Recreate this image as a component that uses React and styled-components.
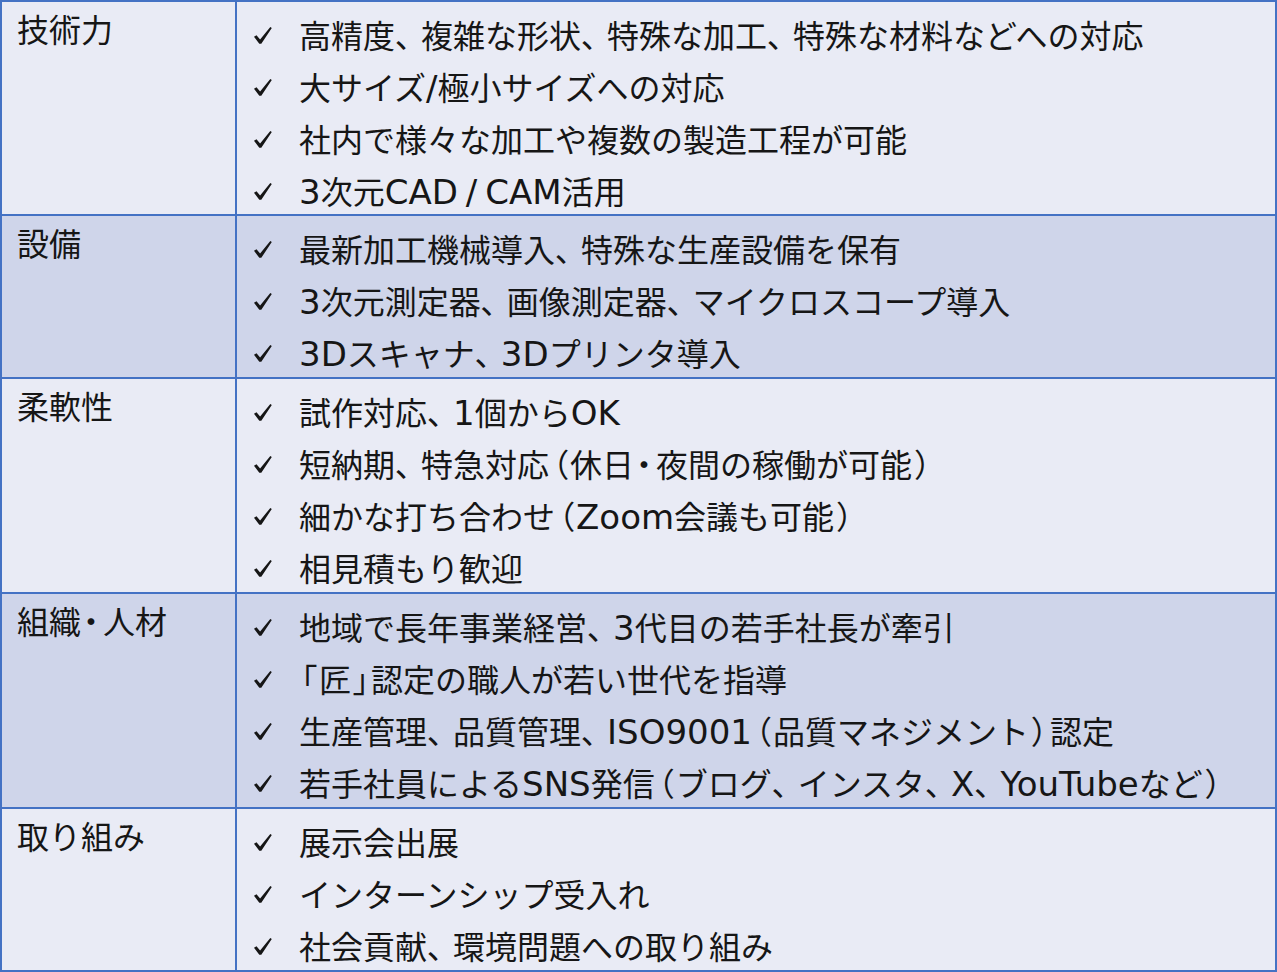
import React from "react";
import styled, { createGlobalStyle } from "styled-components";

const Global = createGlobalStyle`
  html, body { margin: 0; padding: 0; background: #ffffff; }
  body { font-family: "Noto Sans CJK JP", "Noto Sans", sans-serif; color: #161616; }
`;

const rows = [
  {
    label: "技術力",
    h: 212,
    items: [
      "高精度、複雑な形状、特殊な加工、特殊な材料などへの対応",
      "大サイズ/極小サイズへの対応",
      "社内で様々な加工や複数の製造工程が可能",
      "3次元CAD/CAM活用",
    ],
  },
  {
    label: "設備",
    h: 161,
    items: [
      "最新加工機械導入、特殊な生産設備を保有",
      "3次元測定器、画像測定器、マイクロスコープ導入",
      "3Dスキャナ、3Dプリンタ導入",
    ],
  },
  {
    label: "柔軟性",
    h: 213,
    items: [
      "試作対応、1個からOK",
      "短納期、特急対応（休日・夜間の稼働が可能）",
      "細かな打ち合わせ（Zoom会議も可能）",
      "相見積もり歓迎",
    ],
  },
  {
    label: "組織・人材",
    h: 213,
    items: [
      "地域で長年事業経営、3代目の若手社長が牽引",
      "「匠」認定の職人が若い世代を指導",
      "生産管理、品質管理、ISO9001（品質マネジメント）認定",
      "若手社員によるSNS発信（ブログ、インスタ、X、YouTubeなど）",
    ],
  },
  {
    label: "取り組み",
    h: 161,
    items: ["展示会出展", "インターンシップ受入れ", "社会貢献、環境問題への取り組み"],
  },
];

const Table = styled.div`
  display: grid;
  grid-template-columns: 233px 1038px;
  gap: 2px;
  border: 2px solid #4472c4;
  background: #4472c4;
  width: 1273px;
  height: 968px;
`;

const LabelCell = styled.div`
  background: ${(p) => (p.$band ? "#cfd5ea" : "#e9ebf5")};
  padding: 0 0 0 15px;
  font-size: 32px;
  line-height: 52px;
  white-space: nowrap;
`;

const ListCell = styled.ul`
  background: ${(p) => (p.$band ? "#cfd5ea" : "#e9ebf5")};
  margin: 0;
  padding: 6px 0 0 17px;
  list-style: none;
`;

const Item = styled.li`
  display: flex;
  align-items: center;
  height: 52px;
  font-size: 32px;
  line-height: 52px;
  white-space: nowrap;
`;

const CheckBox = styled.span`
  display: flex;
  align-items: center;
  width: 45px;
  flex: none;
  padding-top: 2px;
`;

const Latin = styled.span`
  font-family: "DejaVu Sans", "Noto Sans", sans-serif;
  font-size: 34px;
  line-height: 1;
`;

const Slash = styled.span`
  margin: 0 ${(p) => (p.$wide ? 8 : 0)}px;
`;

const Punct = styled.span`
  font-feature-settings: "palt" 1;
  letter-spacing: ${(p) => p.$space}px;
  margin-left: ${(p) => p.$lead}px;
`;

const punctSpace = {
  "、": [10, 0],
  "（": [2, 3],
  "）": [2, 3],
  "・": [4, 2],
  "「": [2, 2],
  "」": [2, 2],
};

function renderLatin(run, key) {
  if (!run.includes("/")) return <Latin key={key}>{run}</Latin>;
  const bits = run.split("/");
  const wide = bits.every((b) => b.length > 0);
  return (
    <Latin key={key}>
      {bits.map((b, j) => (
        <React.Fragment key={j}>
          {j > 0 && <Slash $wide={wide}>/</Slash>}
          {b}
        </React.Fragment>
      ))}
    </Latin>
  );
}

function renderText(text) {
  const parts = text.split(/([A-Za-z0-9/]+|[、（）・「」])/).filter(Boolean);
  return parts.map((part, i) => {
    if (/^[A-Za-z0-9/]+$/.test(part)) return renderLatin(part, i);
    if (punctSpace[part]) {
      const [space, lead] = punctSpace[part];
      return (
        <Punct key={i} $space={space} $lead={lead}>
          {part}
        </Punct>
      );
    }
    return <React.Fragment key={i}>{part}</React.Fragment>;
  });
}

const Check = () => (
  <svg width="18" height="17" viewBox="0 0 18 17" aria-hidden="true">
    <path
      d="M0 9.8 L2.5 8.2 L6.1 12.5 L16.3 0 L17.8 1 L7.3 16.8 L5.3 16.8 Z"
      fill="#161616"
    />
  </svg>
);

export default function App() {
  return (
    <>
      <Global />
      <Table style={{ gridTemplateRows: rows.map((r) => r.h + "px").join(" ") }}>
        {rows.map((r, i) => (
          <React.Fragment key={r.label}>
            <LabelCell $band={i % 2 === 1}>{renderText(r.label)}</LabelCell>
            <ListCell $band={i % 2 === 1}>
              {r.items.map((t) => (
                <Item key={t}>
                  <CheckBox>
                    <Check />
                  </CheckBox>
                  <span>{renderText(t)}</span>
                </Item>
              ))}
            </ListCell>
          </React.Fragment>
        ))}
      </Table>
    </>
  );
}
